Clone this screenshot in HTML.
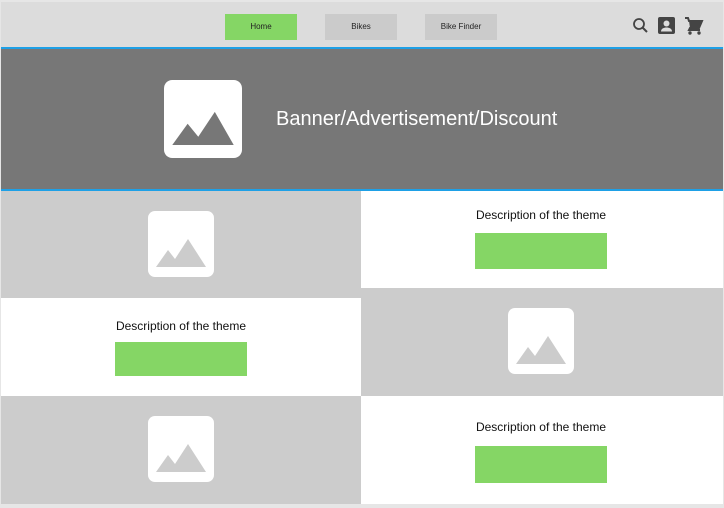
<!DOCTYPE html>
<html><head><style>
*{margin:0;padding:0;box-sizing:border-box}
body{width:724px;height:508px;background:#e6e6e6;position:relative;overflow:hidden;font-family:"Liberation Sans",Arial,sans-serif}
.a{position:absolute}
.btn{position:absolute;top:14px;height:26px;width:72px;background:#cbcbcb;font-size:8px;color:#222;text-align:center;line-height:26px}
.g{background:#cccccc}.w{background:#fff}
.desc{position:absolute;font-size:12px;color:#111;text-align:center;width:360px}
.gb{position:absolute;background:#85d665}
</style></head><body>
<div class="a" style="left:1px;top:2px;width:722px;height:45px;background:#dcdcdc"></div>
<div class="btn" style="left:225px;background:#85d665">Home</div>
<div class="btn" style="left:325px">Bikes</div>
<div class="btn" style="left:425px">Bike Finder</div>
<svg class="a" style="left:630px;top:16px" width="76" height="20" viewBox="0 0 76 20">
<circle cx="9" cy="8" r="5" fill="none" stroke="#444" stroke-width="1.8"/><line x1="12.5" y1="11.5" x2="17" y2="16" stroke="#444" stroke-width="2"/>
<rect x="28" y="1" width="17" height="17" rx="2" fill="#444"/><circle cx="36.5" cy="7.5" r="3" fill="#dcdcdc"/><path d="M31 15.5c0-3 3-4 5.5-4s5.5 1 5.5 4z" fill="#dcdcdc"/>
<path d="M55 2h3l1 3h13l-3 7h-9l-1 2h11" fill="none" stroke="#444" stroke-width="2"/><path d="M59 5h13l-3 7h-9z" fill="#444"/><circle cx="60" cy="17" r="1.7" fill="#444"/><circle cx="69" cy="17" r="1.7" fill="#444"/>
</svg>
<div class="a" style="left:1px;top:47px;width:722px;height:2px;background:#1ea0e6"></div>
<div class="a" style="left:1px;top:49px;width:722px;height:140px;background:#777"></div>
<div class="a" style="left:1px;top:189px;width:722px;height:2px;background:#1ea0e6"></div>
<svg class="a" style="left:164px;top:80px" width="78" height="78" viewBox="0 0 66 66"><rect width="66" height="66" rx="7" fill="#fff"/><path d="M7 55L20 37l9 11 14-21 16 28z" fill="#777"/></svg>
<div class="a" style="left:276px;top:108px;font-size:20px;color:#fff">Banner/Advertisement/Discount</div>
<div class="a g" style="left:1px;top:191px;width:360px;height:107px"></div>
<div class="a w" style="left:1px;top:298px;width:360px;height:98px"></div>
<div class="a g" style="left:1px;top:396px;width:360px;height:108px"></div>
<div class="a w" style="left:361px;top:191px;width:362px;height:97px"></div>
<div class="a g" style="left:361px;top:288px;width:362px;height:108px"></div>
<div class="a w" style="left:361px;top:396px;width:362px;height:108px"></div>
<svg class="a" style="left:148px;top:211px" width="66" height="66" viewBox="0 0 66 66"><rect width="66" height="66" rx="7" fill="#fff"/><path d="M8 56l12-17 7 9 13-20 18 28z" fill="#ccc"/></svg>
<svg class="a" style="left:508px;top:308px" width="66" height="66" viewBox="0 0 66 66"><rect width="66" height="66" rx="7" fill="#fff"/><path d="M8 56l12-17 7 9 13-20 18 28z" fill="#ccc"/></svg>
<svg class="a" style="left:148px;top:416px" width="66" height="66" viewBox="0 0 66 66"><rect width="66" height="66" rx="7" fill="#fff"/><path d="M8 56l12-17 7 9 13-20 18 28z" fill="#ccc"/></svg>
<div class="desc" style="left:361px;top:208px">Description of the theme</div>
<div class="gb" style="left:475px;top:233px;width:132px;height:36px"></div>
<div class="desc" style="left:1px;top:319px">Description of the theme</div>
<div class="gb" style="left:115px;top:342px;width:132px;height:34px"></div>
<div class="desc" style="left:361px;top:420px">Description of the theme</div>
<div class="gb" style="left:475px;top:446px;width:132px;height:37px"></div>
</body></html>
